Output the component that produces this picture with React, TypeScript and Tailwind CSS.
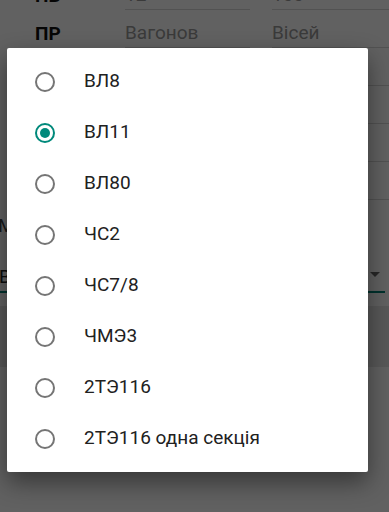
import { useState } from 'react';

const models = ['ВЛ8', 'ВЛ11', 'ВЛ80', 'ЧС2', 'ЧС7/8', 'ЧМЭ3', '2ТЭ116', '2ТЭ116 одна секція'];

function FormRow({ label, a, b }: { label: string; a: string; b: string }) {
  return (
    <div className="flex h-[38px] items-end leading-none">
      <div className="w-[125px] pl-[35px] pb-[5px] text-[19px] font-bold text-[#111]">{label}</div>
      <div className="w-[125px] border-b border-[#d8d8d8] pb-[5px] text-[19px] text-[#9a9a9a]">{a}</div>
      <div className="ml-[22px] flex-1 border-b border-[#d8d8d8] pb-[5px] text-[19px] text-[#9a9a9a]">{b}</div>
    </div>
  );
}

export default function App() {
  const [selected, setSelected] = useState('ВЛ11');

  return (
    <div className="relative h-[512px] w-[389px] overflow-hidden bg-white font-['Roboto',sans-serif]">
      {/* page behind the dialog */}
      <div className="-mt-[28px]">
        <FormRow label="ПВ" a="12" b="100" />
        <FormRow label="ПР" a="Вагонов" b="Вісей" />
        <FormRow label="" a="" b="" />
        <FormRow label="" a="" b="" />
        <FormRow label="" a="" b="" />
        <FormRow label="" a="" b="" />
        <div className="-ml-[2px] h-[50px] pt-[16px] text-[19px] leading-[20px] text-[#444]">Модель локомотиву</div>
        <div className="relative mr-[4px] flex h-[43px] items-end border-b-2 border-[#008577] pb-[5px] leading-none">
          <span className="-ml-[1px] text-[19px] text-[#222]">ВЛ11</span>
          <span className="absolute right-[5px] top-[22px] h-0 w-0 border-x-[5px] border-t-[5px] border-x-transparent border-t-[#666]" />
        </div>
        <div className="mt-[13px] h-[61px] bg-[#e6e6e6]" />
      </div>

      {/* scrim */}
      <div className="absolute inset-0 bg-black/[0.62]" />

      {/* dialog */}
      <div className="absolute left-[7px] top-[48px] w-[361px] rounded-[2px] bg-white py-[8px] shadow-[0_10px_24px_rgba(0,0,0,0.45)]">
        {models.map((m) => {
          const on = m === selected;
          return (
            <button
              key={m}
              onClick={() => setSelected(m)}
              className="flex h-[51px] w-full items-center pl-[28px] text-left"
            >
              <span
                className={`flex h-[20px] w-[20px] items-center justify-center rounded-full border-2 ${on ? 'border-[#00897b]' : 'border-[#757575]'}`}
              >
                {on && <span className="h-[10px] w-[10px] rounded-full bg-[#00897b]" />}
              </span>
              <span className="ml-[29px] text-[19px] text-[#212121]">{m}</span>
            </button>
          );
        })}
      </div>
    </div>
  );
}
